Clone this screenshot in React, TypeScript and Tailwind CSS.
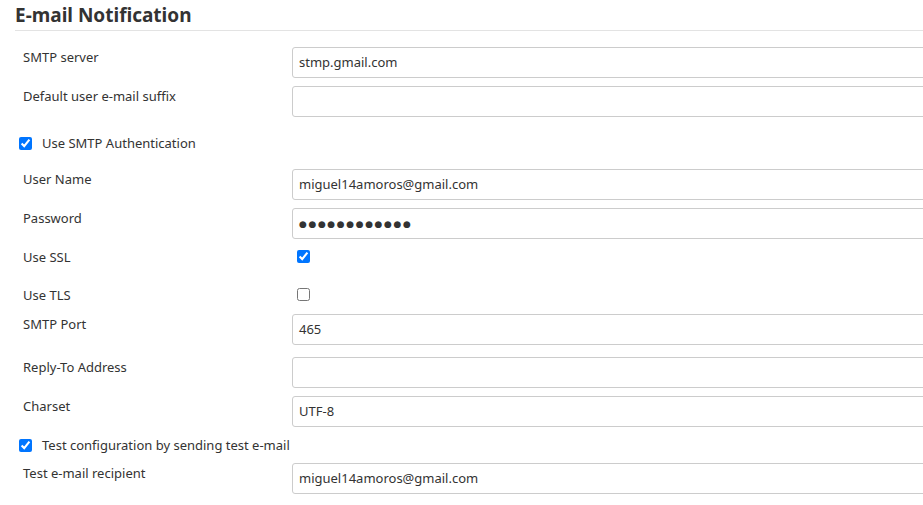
import React from "react";

const font = { fontFamily: '"Noto Sans", "DejaVu Sans", sans-serif' };

function InputRow({ label, value, mt, dots }: { label: string; value?: string; mt: string; dots?: boolean }) {
  return (
    <div className={`flex ${mt}`}>
      <div className="w-[292px] pl-[23px] leading-[20px] shrink-0">{label}</div>
      <div className="flex-1 h-[31px] border border-[#ccc] rounded-[3px] mr-[-10px] px-[6px] flex items-center">
        {dots ? (
          <span className="text-[9px] tracking-[1.6px] text-[#333] leading-none">●●●●●●●●●●●●</span>
        ) : (
          <span>{value}</span>
        )}
      </div>
    </div>
  );
}

function CheckRow({ label, checked, mt }: { label: string; checked: boolean; mt: string }) {
  return (
    <div className={`flex items-center h-[20px] ${mt}`}>
      <input type="checkbox" defaultChecked={checked} className="ml-[19px] mr-[10px] w-[13px] h-[13px]" />
      <span className="leading-[20px]">{label}</span>
    </div>
  );
}

function CheckInRow({ label, checked, mt, h }: { label: string; checked: boolean; mt: string; h: string }) {
  return (
    <div className={`flex ${mt} ${h}`}>
      <div className="w-[292px] pl-[23px] leading-[20px] shrink-0">{label}</div>
      <div className="pt-[3px] pl-[5px]">
        <input type="checkbox" defaultChecked={checked} className="w-[13px] h-[13px] block" />
      </div>
    </div>
  );
}

export default function App() {
  return (
    <div className="w-[923px] h-[505px] overflow-hidden bg-white text-[#333] text-[13px]" style={font}>
      <div className="ml-[15px] h-[31px] border-b border-[#e3e3e3] flex items-center">
        <h1 className="text-[19px] font-bold leading-[30px] text-[#333]">E-mail Notification</h1>
      </div>
      <InputRow label="SMTP server" value="stmp.gmail.com" mt="mt-[16px]" />
      <InputRow label="Default user e-mail suffix" mt="mt-[8px]" />
      <CheckRow label="Use SMTP Authentication" checked mt="mt-[16px]" />
      <InputRow label="User Name" value="miguel14amoros@gmail.com" mt="mt-[16px]" />
      <InputRow label="Password" dots mt="mt-[8px]" />
      <CheckInRow label="Use SSL" checked mt="mt-[8px]" h="h-[29px]" />
      <CheckInRow label="Use TLS" checked={false} mt="mt-[9px]" h="h-[20px]" />
      <InputRow label="SMTP Port" value="465" mt="mt-[9px]" />
      <InputRow label="Reply-To Address" mt="mt-[12px]" />
      <InputRow label="Charset" value="UTF-8" mt="mt-[8px]" />
      <CheckRow label="Test configuration by sending test e-mail" checked mt="mt-[8px]" />
      <InputRow label="Test e-mail recipient" value="miguel14amoros@gmail.com" mt="mt-[8px]" />
    </div>
  );
}
